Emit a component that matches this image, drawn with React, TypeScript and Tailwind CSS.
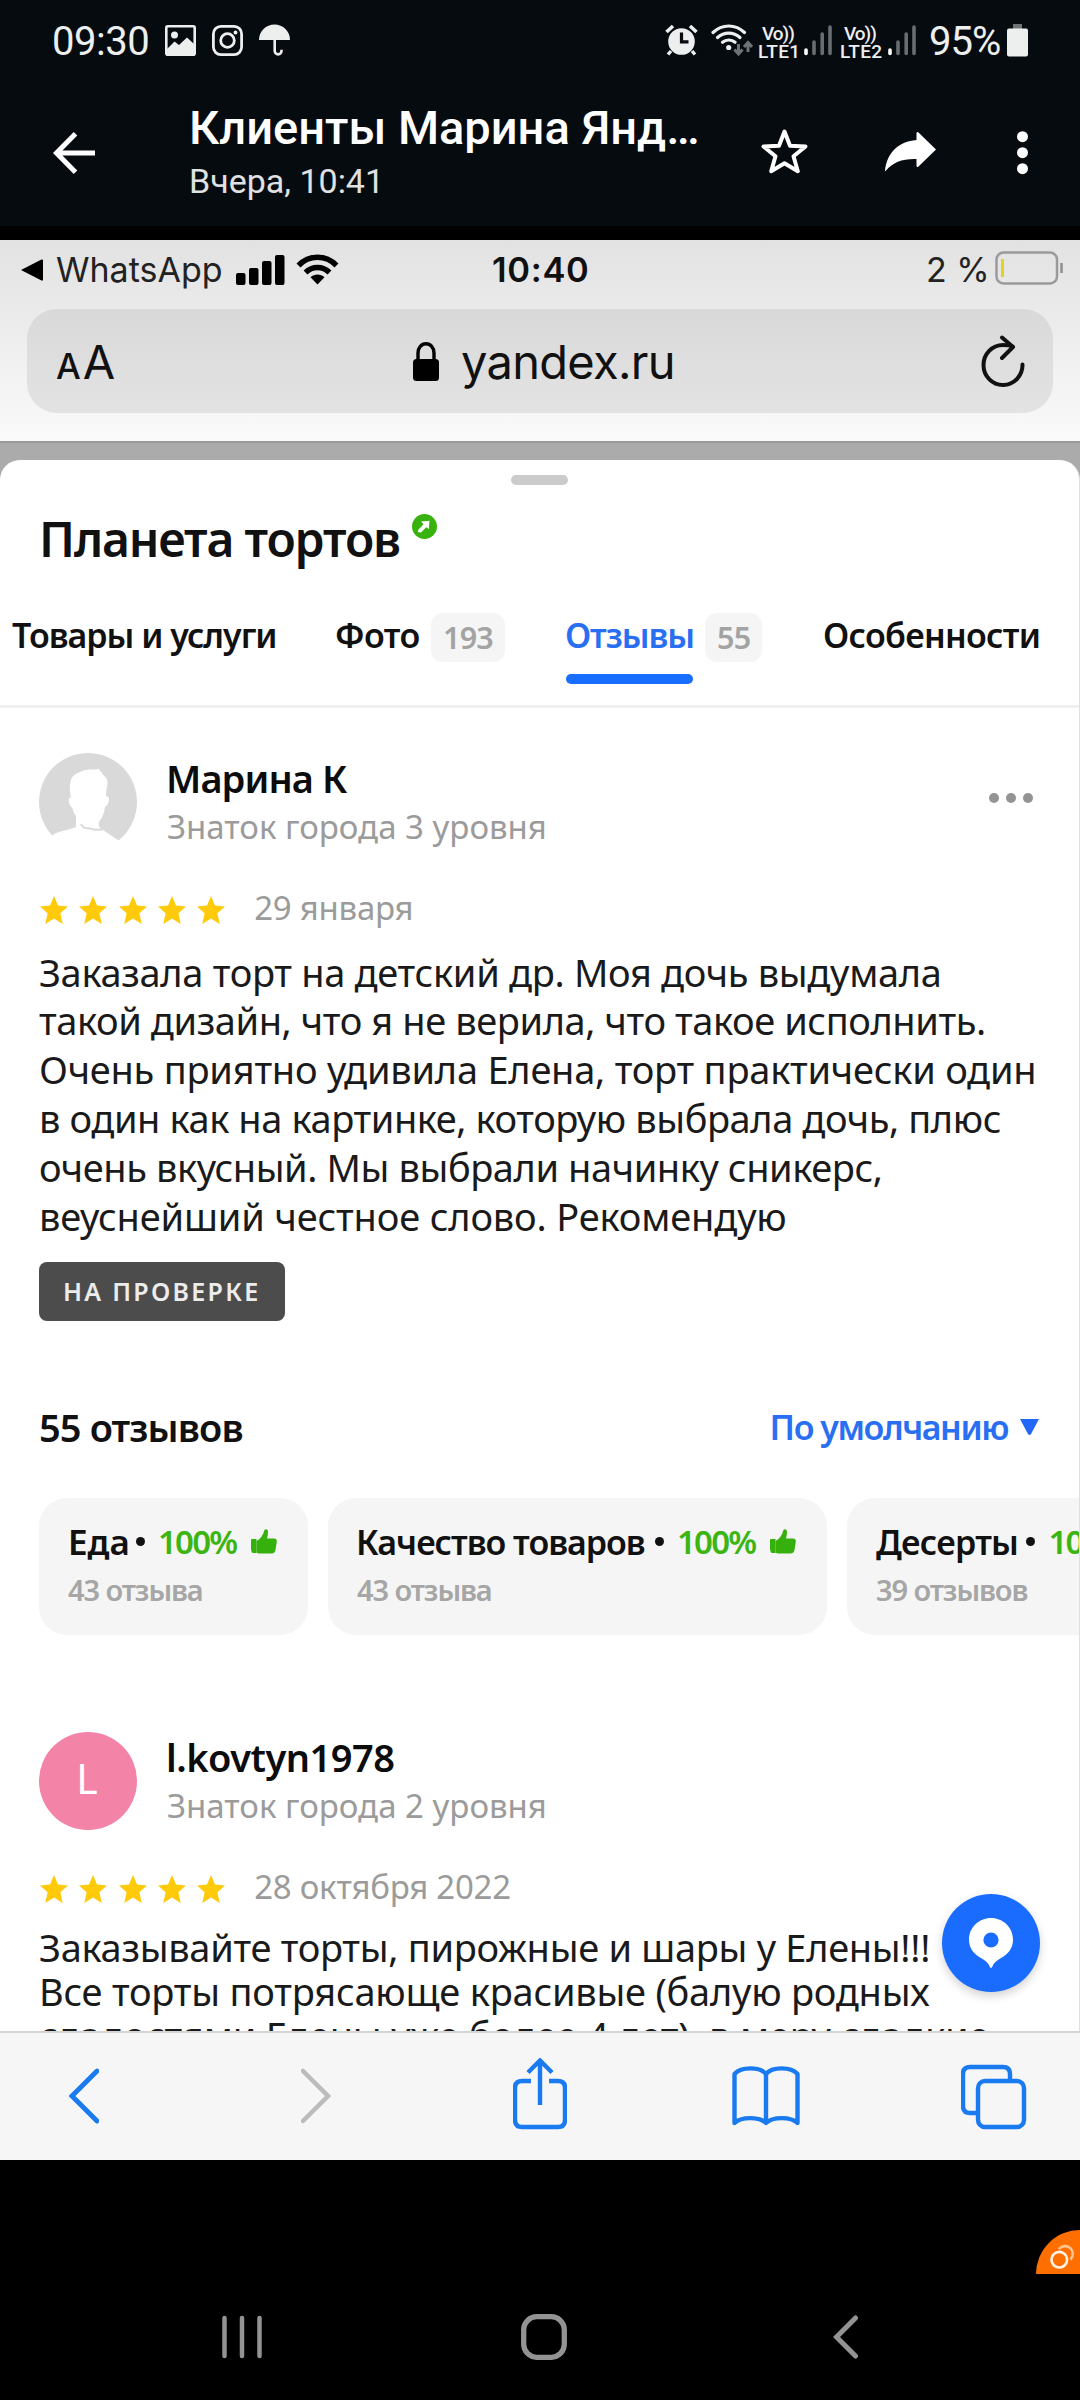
import type { ReactNode } from 'react'
import clsx from 'clsx'

const firstReview = [
  { text: 'Заказала торт на детский др. Моя дочь выдумала', tracking: 'tracking-[-0.32px]' },
  { text: 'такой дизайн, что я не верила, что такое исполнить.', tracking: 'tracking-[-0.41px]' },
  { text: 'Очень приятно удивила Елена, торт практически один', tracking: 'tracking-[-0.24px]' },
  { text: 'в один как на картинке, которую выбрала дочь, плюс', tracking: 'tracking-[-0.42px]' },
  { text: 'очень вкусный. Мы выбрали начинку сникерс,', tracking: 'tracking-[-0.42px]' },
  { text: 'веуснейший честное слово. Рекомендую', tracking: 'tracking-[-0.15px]' },
]

const secondReview = [
  { text: 'Заказывайте торты, пирожные и шары у Елены!!!', tracking: 'tracking-[-0.3px]' },
  { text: 'Все торты потрясающе красивые (балую родных', tracking: 'tracking-[-0.23px]' },
  { text: 'сладостями Елены уже более 4 лет), в меру сладкие', tracking: 'tracking-[-0.18px]' },
]

const aspects = [
  {
    name: 'Еда',
    count: '43 отзыва',
    card: 'w-[269px] pl-7',
    label: 'w-[69px] pl-px text-[35px]',
  },
  {
    name: 'Качество товаров',
    count: '43 отзыва',
    card: 'w-[499px] pl-7',
    label: 'w-[299px] text-[34px] tracking-[-1px]',
  },
  {
    name: 'Десерты',
    count: '39 отзывов',
    card: 'w-[320px] pl-7',
    label: 'w-[152px] pl-px text-[34px] tracking-[-0.7px]',
  },
]

/* Android status bar */

function AlarmIcon() {
  return (
    <svg width="33" height="32" viewBox="0 0 33 32" fill="none">
      <circle cx="16.5" cy="17.5" r="13.3" fill="#edefef" />
      <path d="M1.5 8 8 2M31.5 8 25 2" stroke="#edefef" strokeWidth="3.6" />
      <path d="M6 27l-3 3.5M27 27l3 3.5" stroke="#edefef" strokeWidth="3.4" />
      <path d="M16.5 8.5v9.3h7" stroke="#060b0f" strokeWidth="3.2" />
    </svg>
  )
}

function WifiSmallIcon() {
  return (
    <svg width="42" height="33" viewBox="0 0 42 33" fill="none">
      <g stroke="#edefef" strokeWidth="3.2" strokeLinecap="round">
        <path d="M2 8.500C11-.200 24.500-.200 33.500 8.500" />
        <path d="M6.500 13.500c6.500-5.900 16-5.900 22.500 0" />
        <path d="M11.500 18.300c3.600-3.100 9-3.100 12.600 0" />
      </g>
      <circle cx="17.700" cy="23.500" r="2.600" fill="#edefef" />
      <g stroke="#6f7375" strokeWidth="3">
        <path d="M27.500 20v9M23.500 25.500l4 4.500 4-4.500" />
        <path d="M37 28V19M33 23l4-4.500 4 4.500" />
      </g>
    </svg>
  )
}

function Signal({ className }: { className?: string }) {
  return (
    <svg width="28" height="32" viewBox="0 0 28 32" className={className} strokeWidth="3.6" strokeLinecap="round">
      <path d="M2 26v3.500" stroke="#fff" />
      <path d="M10 18v11.500M18.200 10v19.500M26 3v26.500" stroke="#6a6d6f" />
    </svg>
  )
}

function Volte({ sim, className }: { sim: string; className?: string }) {
  return (
    <div className={clsx('pt-[5px] leading-[18px] font-medium whitespace-nowrap', className)}>
      <div className="pl-1 text-[19px] tracking-[-1px]">Vo))</div>
      <div className="text-[19px] tracking-[0.3px]">{sim}</div>
    </div>
  )
}

function AndroidStatusBar() {
  return (
    <div className="flex h-20 items-center pr-[52px] pl-[52px] text-[#edefef]">
      <span className="w-[113px] pt-[3px] text-[40px] leading-[56px] tracking-[-0.5px]">09:30</span>
      <svg width="31" height="31" viewBox="0 0 31 31" fill="none">
        <rect x="1.3" y="1.3" width="28.4" height="28.4" rx="1.5" stroke="#edefef" strokeWidth="2.6" />
        <circle cx="9.5" cy="10" r="3.5" fill="#edefef" />
        <path d="M2 24 9.500 16.500 14 20 22 12.500 29 19v10.500H2z" fill="#edefef" />
      </svg>
      <svg width="31" height="31" viewBox="0 0 31 31" fill="none" className="ml-4" stroke="#edefef">
        <rect x="1.4" y="1.4" width="28.2" height="28.2" rx="7.5" strokeWidth="2.8" />
        <circle cx="15.5" cy="15.5" r="6.8" strokeWidth="2.8" />
        <circle cx="23.5" cy="7.5" r="1.9" fill="#edefef" stroke="none" />
      </svg>
      <svg width="31" height="32" viewBox="0 0 31 32" fill="none" className="ml-4">
        <path d="M0 16C0 7 7 .5 15.500.5S31 7 31 16z" fill="#edefef" />
        <path d="M15.700 15v12a3.400 3.400 0 0 0 6.800 0v-1.200" stroke="#edefef" strokeWidth="2.600" />
      </svg>

      <div className="ml-auto flex items-center">
        <AlarmIcon />
        <div className="w-[13px]" />
        <WifiSmallIcon />
        <Volte sim="LTE1" className="ml-[5px] w-[46px]" />
        <Signal />
        <Volte sim="LTE2" className="ml-2 w-12" />
        <Signal />
        <span className="ml-[13px] w-[78px] pt-[3px] text-[40px] leading-[56px] tracking-[-1px]">95%</span>
        <svg width="21" height="33" viewBox="0 0 21 33">
          <path d="M6 0h9v6H6z" fill="#6f7375" />
          <rect y="4.5" width="21" height="28" rx="2" fill="#edefef" />
        </svg>
      </div>
    </div>
  )
}

function ViewerHeader() {
  return (
    <div className="flex h-[146px] items-center pl-[53px] text-white">
      <svg width="42" height="42" viewBox="0 0 42 42" fill="none" stroke="currentColor" strokeWidth="5">
        <path d="M42 21H4M22.500 1.800 3.500 21l19 19.200" />
      </svg>
      <div className="ml-[94px] w-[572px] pb-[3px] whitespace-nowrap">
        <div className="text-[47px] leading-[56px] font-medium">Клиенты Марина Янд…</div>
        <div className="mt-[3px] text-[34px] leading-[44px] text-[#e0e1e2]">Вчера, 10:41</div>
      </div>
      <svg width="47" height="46" viewBox="0 0 47 46" fill="none" stroke="currentColor" strokeWidth="4" strokeLinejoin="round" className="mb-1">
        <path d="M23.500 3.500l5.500 14.200 15.500.8-12 9.700 4.300 15L23.500 35.300l-13.300 7.900 4.300-15-12-9.700 15.500-.8z" />
      </svg>
      <svg width="51" height="43" viewBox="0 -2 51 43" fill="currentColor" className="mb-1 ml-[77px]">
        <path d="M0 39C2 20 14 9.500 31.500 8V1.500c0-1.500 1-2 2-1L51 17.500l-17.500 17c-1 1-2 .5-2-1V27C18 26.500 8 30 1 38.500c-.5.700-1 1-1 .5z" />
      </svg>
      <svg width="11" height="44" viewBox="0 0 11 44" fill="currentColor" className="ml-[81px]">
        <circle cx="5.5" cy="5.7" r="5.5" />
        <circle cx="5.5" cy="21.7" r="5.5" />
        <circle cx="5.5" cy="37.7" r="5.5" />
      </svg>
    </div>
  )
}

/* Safari */

function SafariTop() {
  return (
    <div className="h-[201px] bg-linear-to-b from-[#e2e2e2] to-[#fafafa] font-['Inter',sans-serif]">
      <div className="flex h-[60px] items-center pr-4 pl-[21px] whitespace-nowrap">
        <svg width="22" height="22" viewBox="0 0 22 22">
          <path d="M0 11 20.500.5Q22 0 22 1.500v19q0 1.500-1.500 1z" />
        </svg>
        <span className="ml-[13px] w-[180px] text-[34px] leading-10 text-[#222]">WhatsApp</span>
        <svg width="49" height="32" viewBox="0 0 49 32">
          <rect x="0" y="19" width="9.5" height="12" rx="2" />
          <rect x="13" y="14" width="9.5" height="17" rx="2" />
          <rect x="26" y="7" width="9.5" height="24" rx="2" />
          <rect x="39" y="1" width="9.5" height="30" rx="2" />
        </svg>
        <svg width="43" height="32" viewBox="0 0 43 32" fill="none" className="mb-0.5 ml-[11px]" stroke="#000" strokeWidth="5.5">
          <path d="M2.500 12.500C13 1.500 30 1.500 40.500 12.500" />
          <path d="M9.500 19.500c6.800-6.700 17.200-6.700 24 0" />
          <path d="M21.500 31.500l-7-7.200c4-3.600 10-3.600 14 0z" fill="#000" stroke="none" />
        </svg>
        <span className="ml-[153px] text-[34.5px] leading-10 font-semibold tracking-[0.7px] text-[#111]">10:40</span>
        <span className="ml-auto w-[69px] text-[34px] leading-10 text-[#222]">2 %</span>
        <svg width="69" height="34" viewBox="0 0 69 34" fill="none" className="mb-1">
          <rect x="1.5" y="1.5" width="60.5" height="31" rx="7" stroke="#9a9a9a" strokeWidth="2.5" />
          <path d="M7.500 8v18" stroke="#e3d21e" strokeWidth="3" />
          <path d="M66.500 12v10" stroke="#8f8f8f" strokeWidth="2.500" />
        </svg>
      </div>

      <div className="mx-[27px] mt-[9px] flex h-[104px] items-center rounded-[30px] bg-linear-to-b from-[#d9d9d9] to-[#e3e3e3] pr-7 pl-[29px] text-[#111]">
        <div className="flex w-[357px] items-baseline pt-[6px] leading-[56px]">
          <span className="text-[35px] font-medium">A</span>
          <span className="ml-0.5 text-[47px]">A</span>
        </div>
        <svg width="26" height="39" viewBox="0 0 26 39" fill="none">
          <path d="M5 18v-7c0-5.500 3.500-9.200 8-9.200s8 3.700 8 9.200v7" stroke="#000" strokeWidth="3.400" />
          <rect y="17" width="26" height="22" rx="3.5" fill="#000" />
        </svg>
        <span className="ml-[22px] pt-px text-[47px] leading-[56px] tracking-[-0.7px]">yandex.ru</span>
        <svg
          width="44"
          height="52"
          viewBox="0 0 44 52"
          fill="none"
          stroke="#111"
          strokeWidth="4"
          strokeLinecap="round"
          strokeLinejoin="round"
          className="ml-auto"
        >
          <path d="M41.500 29.500A19.500 20 0 1 1 22 10c3.500 0 7 0 9.500 1.500" />
          <path d="M21 2.500l11 9.500-11 11" />
        </svg>
      </div>
    </div>
  )
}

function SafariToolbar() {
  return (
    <div className="flex h-[129px] shrink-0 items-center border-t-2 border-[#d4d4d4] bg-[#f6f6f6] pb-0.5 pl-[69px] text-[#1a7af0]">
      <svg width="30" height="76" viewBox="0 0 30 76" fill="none" stroke="currentColor" strokeWidth="4.8" strokeLinecap="round">
        <path d="M28 13 3 38l25 25" />
      </svg>
      <svg width="30" height="76" viewBox="0 0 30 76" fill="none" stroke="#bcbcbc" strokeWidth="4.5" strokeLinecap="round" className="ml-[202px]">
        <path d="M2 13l25 25L2 63" />
      </svg>
      <svg width="54" height="76" viewBox="0 0 54 76" fill="none" stroke="currentColor" strokeWidth="4.4" className="ml-[182px]">
        <path d="M18 23H9q-7 0-7 7v32q0 7 7 7h36q7 0 7-7V30q0-7-7-7h-9" />
        <path d="M27 47V4M15 14.500 27 2.500l12 12" />
      </svg>
      <svg width="68" height="76" viewBox="0 0 68 76" fill="none" stroke="currentColor" strokeWidth="4.4" strokeLinejoin="round" className="ml-[165px]">
        <path d="M34 16C28 8.500 9 8.500 2.500 16v49c6.500-6.500 25-6.500 31.500 0 6.500-6.500 25-6.500 31.500 0V16C59 8.500 40 8.500 34 16z" />
        <path d="M34 16v49" />
      </svg>
      <svg width="66" height="76" viewBox="0 0 66 76" fill="none" stroke="currentColor" strokeWidth="4.4" className="ml-[161px]">
        <path d="M16 55H9q-7 0-7-7V16q0-7 7-7h33q7 0 7 7v6" />
        <rect x="17" y="23" width="46" height="46" rx="7" />
      </svg>
    </div>
  )
}

/* Organisation card */

function TabCount({ children }: { children: ReactNode }) {
  return (
    <span className="mt-[3px] flex h-[49px] items-center rounded-xl bg-[#f5f5f5] px-3 pb-0.5 text-[30.5px] font-semibold tracking-[-0.8px] text-[#a3a3a3]">
      {children}
    </span>
  )
}

function Tabs() {
  return (
    <div className="flex h-[139px] border-b-[3px] border-[#f0f0f0] pt-[41px] pl-3 text-[34px] leading-[50px] font-semibold whitespace-nowrap text-[#111]">
      <span className="w-[323px] tracking-[-1px]">Товары и услуги</span>
      <span className="w-24 tracking-[-0.6px]">Фото</span>
      <div className="flex w-[134px]">
        <TabCount>193</TabCount>
      </div>
      <div className="w-[140px] text-[#2a6ff2]">
        <div className="tracking-[-1.1px]">Отзывы</div>
        <div className="mt-[14px] ml-px h-2.5 w-[127px] rounded-full bg-[#196dff]" />
      </div>
      <div className="flex w-[118px]">
        <TabCount>55</TabCount>
      </div>
      <span className="tracking-[-0.7px]">Особенности</span>
    </div>
  )
}

function Silhouette() {
  return (
    <svg width="98" height="98" viewBox="0 0 98 98">
      <circle cx="49" cy="49" r="49" fill="#d9d9d9" />
      <path
        d="M41 19c6-3.500 12-2 19-3 1 2.500 2 3 3.500 4-.5 3 6 4 5 11-1 5-1.500 8-1.500 12 3 0 3.500 3 2.500 6-.8 3-2 4-3.500 5-.5 6-3 11-6 15-1 4 1 7 4 8l15 10 19 12H0l15-18c6-3 15-4 22-7V63c-2-2-3-5-3.500-8-2-1-3-3-3.500-6-.5-3-.5-5 2-4-1-6-2-11 0-18 1-4 4-6 9-8z"
        fill="#fff"
      />
      <path d="M42 71c1 3 4 4.500 8 4.300q7 2.500 14 1" stroke="#d9d9d9" strokeWidth="2" fill="none" />
    </svg>
  )
}

function Stars() {
  return (
    <div className="mt-1 flex gap-[11.3px]">
      {[0, 1, 2, 3, 4].map((i) => (
        <svg key={i} width="28" height="28" viewBox="0 0 28 28" fill="#ffca0a">
          <path d="M14 0l4 9.600 10 .9-7.600 6.700L22.700 28 14 22.400 5.300 28l2.300-10.800L0 10.500l10-.9z" />
        </svg>
      ))}
    </div>
  )
}

type ReviewProps = {
  avatar: ReactNode
  name: string
  nameClass: string
  rank: string
  date: string
  menu?: boolean
  lines: { text: string; tracking: string }[]
  bodyClass: string
}

function Review({ avatar, name, nameClass, rank, date, menu, lines, bodyClass }: ReviewProps) {
  return (
    <div className="pl-[39px] whitespace-nowrap">
      <div className="flex h-24">
        <div className="h-[98px] w-[98px] shrink-0">{avatar}</div>
        <div className="ml-[29px]">
          <div className={clsx('text-[38px] leading-[50px] font-semibold text-[#0c0c0c]', nameClass)}>{name}</div>
          <div className="mt-0.5 pl-px text-[33px] leading-[44px] text-[#9b9b9b]">{rank}</div>
        </div>
        {menu ? (
          <div className="mt-10 mr-[46px] ml-auto flex gap-[7px]">
            <div className="size-2.5 rounded-full bg-[#949494]" />
            <div className="size-2.5 rounded-full bg-[#949494]" />
            <div className="size-2.5 rounded-full bg-[#949494]" />
          </div>
        ) : null}
      </div>
      <div className="mt-[37px] flex h-[44px] items-center pl-px">
        <Stars />
        <span className="ml-[29px] text-[33px] leading-[44px] tracking-[-0.25px] text-[#9b9b9b]">{date}</span>
      </div>
      <div className={clsx('text-[38px] text-[#1a1a1a]', bodyClass)}>
        {lines.map((line) => (
          <div key={line.text} className={line.tracking}>
            {line.text}
          </div>
        ))}
      </div>
    </div>
  )
}

function ThumbUp() {
  return (
    <svg width="26" height="25" viewBox="0 0 26 25" fill="#35b00d">
      <path d="M0 11q0-1 1-1h4.500v14H2q-1.500 0-2-4z" />
      <path d="M5.500 12c4-2 6.500-5.500 8-11 .5-1.500 3.500-1 3.500 1.500 0 2.500-.5 5-1 7H23c2 0 3 1.200 2.800 3L24.500 21c-.5 2.500-2 3.500-4 3.500H9c-1.500 0-2.500-.3-3.500-1z" />
    </svg>
  )
}

function Aspects() {
  return (
    <div className="mt-[46px] ml-[39px] flex gap-5 overflow-hidden whitespace-nowrap">
      {aspects.map((a) => (
        <div key={a.name} className={clsx('h-[137px] shrink-0 rounded-[28px] bg-[#f5f5f5] pt-[21px]', a.card)}>
          <div className="flex h-[46px] items-center leading-[46px]">
            <span className={clsx('font-semibold text-[#111]', a.label)}>{a.name}</span>
            <span className="size-[9px] shrink-0 rounded-full bg-[#111]" />
            <span className="ml-[13px] w-[93px] text-[33px] font-semibold tracking-[-1.8px] text-[#3cb512]">100%</span>
            <ThumbUp />
          </div>
          <div className="mt-1.5 pl-px text-[29px] leading-[38px] font-semibold tracking-[-1.1px] text-[#a6a6a6]">
            {a.count}
          </div>
        </div>
      ))}
    </div>
  )
}

function OrgCard() {
  return (
    <div className="min-h-0 flex-1 overflow-hidden bg-[#ababab]">
      <div className="h-[19px] border-t-2 border-[#999]" />
      <div className="h-[1700px] rounded-t-[20px] border-r border-[#e0e0e0] bg-white font-['Noto_Sans',sans-serif]">
        <div className="flex h-[49px] justify-center pt-[15px]">
          <div className="h-2.5 w-[57px] rounded-full bg-[#cbcbcb]" />
        </div>
        <div className="flex h-[60px] pl-[39px]">
          <h1 className="w-[373px] text-[48px] leading-[60px] font-semibold tracking-[-1.15px] whitespace-nowrap text-[#111]">
            Планета тортов
          </h1>
          <svg width="25" height="25" viewBox="0 0 25 25" className="mt-[5px]">
            <circle cx="12.5" cy="12.5" r="12.5" fill="#38b20f" />
            <path d="M9 7.500l8.500-.8L16.800 15l-2.500-1.700-5.300 5.200-3.200-.5.500-2.300 5.300-5.400z" fill="#fff" />
          </svg>
        </div>

        <Tabs />

        <div className="mt-[45px]">
          <Review
            avatar={<Silhouette />}
            name="Марина К"
            nameClass="tracking-[-0.9px]"
            rank="Знаток города 3 уровня"
            date="29 января"
            menu
            lines={firstReview}
            bodyClass="mt-[17.5px] leading-[48.87px]"
          />
        </div>
        <div className="mt-[21px] ml-[39px] flex h-[59px] w-[246px] items-center rounded-lg bg-[#4c4c4c] pl-6 text-[25px] font-semibold tracking-[2.3px] whitespace-nowrap text-[#ececec]">
          НА ПРОВЕРКЕ
        </div>

        <div className="mt-[81px] flex h-[50px] items-center pr-10 pl-[39px] leading-[50px]">
          <span className="text-[38px] font-semibold tracking-[-0.9px] text-[#111]">55 отзывов</span>
          <span className="ml-auto text-[34px] font-semibold tracking-[-1.45px] text-[#2a6ff2]">По умолчанию</span>
          <svg width="19" height="16" viewBox="0 0 19 16" fill="#2068f5" className="ml-3">
            <path d="M0 0h19l-8 15q-1.500 2-3 0z" />
          </svg>
        </div>
        <Aspects />

        <div className="mt-[97px]">
          <Review
            avatar={
              <div className="flex size-[98px] items-center justify-center rounded-full bg-[#f483a8] pr-0.5 pb-1 text-[41px] text-white">
                L
              </div>
            }
            name="l.kovtyn1978"
            nameClass="tracking-[-0.5px]"
            rank="Знаток города 2 уровня"
            date="28 октября 2022"
            lines={secondReview}
            bodyClass="mt-4 leading-[44.3px]"
          />
        </div>
      </div>
    </div>
  )
}

function AndroidNav() {
  return (
    <div className="flex h-[126px] items-center pl-[222px]">
      <svg width="40" height="44" viewBox="0 0 40 44" stroke="#939393" strokeWidth="4.5" strokeLinecap="round">
        <path d="M2.500 3v38M20 3v38M37.500 3v38" />
      </svg>
      <svg width="46" height="46" viewBox="0 0 46 46" fill="none" className="ml-[259px]">
        <rect x="2.7" y="2.7" width="40.6" height="40.6" rx="13" stroke="#939393" strokeWidth="5.3" />
      </svg>
      <svg width="26" height="44" viewBox="0 0 26 44" fill="none" stroke="#939393" strokeWidth="5" strokeLinecap="round" className="ml-[266px]">
        <path d="M22.500 3 3.500 22l19 19" />
      </svg>
    </div>
  )
}

export default function App() {
  return (
    <div className="h-[2400px] w-[1080px] overflow-hidden bg-black font-['Roboto',sans-serif]">
      <header className="h-[226px] bg-[#060b0f]">
        <AndroidStatusBar />
        <ViewerHeader />
      </header>

      <main className="relative mt-3.5 flex h-[1920px] flex-col overflow-hidden">
        <SafariTop />
        <OrgCard />
        <SafariToolbar />

        {/* Map pin button floats over the reviews */}
        <button
          aria-label="Карта"
          className="absolute top-[1654px] left-[942px] flex size-[98px] items-center justify-center rounded-full bg-[#1a6cff] shadow-[0_4px_10px_rgba(0,0,0,0.18)]"
        >
          <svg width="44" height="50" viewBox="0 0 44 50">
            <path d="M22 0C34 0 44 9.500 44 21.500c0 9-5 14.500-12 18.500-4.500 2.700-7.500 5-9 9.200q-1 1.500-2 0c-1.500-4.200-4.500-6.500-9-9.200C5 36 0 30.500 0 21.500 0 9.500 10 0 22 0z" fill="#fff" />
            <circle cx="22" cy="22" r="7.6" fill="#1a6cff" />
          </svg>
        </button>
      </main>

      <footer className="pt-[70px]">
        <div className="ml-auto h-11 w-11 rounded-tl-full bg-[#ff6f00]">
          <svg width="44" height="44" viewBox="0 0 44 44" fill="none">
            <path d="M23 19a7.800 7.800 0 1 1 11.500 10.500" stroke="#ffc48f" strokeWidth="2.600" />
            <circle cx="23.3" cy="29.7" r="7.8" fill="#ff6f00" stroke="#fff3e6" strokeWidth="2.6" />
          </svg>
        </div>
        <AndroidNav />
      </footer>
    </div>
  )
}
